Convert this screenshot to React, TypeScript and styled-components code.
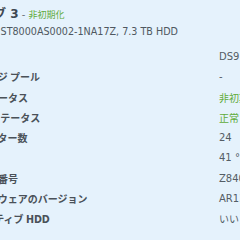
import React from "react";
import styled, { createGlobalStyle } from "styled-components";

const Global = createGlobalStyle`
  html, body {
    margin: 0;
    padding: 0;
    background: #e5f2fc;
    overflow: hidden;
  }
  body {
    width: 240px;
    height: 240px;
  }
`;

const Panel = styled.div`
  width: 420px;
  margin-left: -42px;
  padding-top: 6px;
  font-family: "DejaVu Sans", "Noto Sans CJK JP", sans-serif;
  color: #4a525a;
`;

const Header = styled.div`
  display: flex;
  flex-direction: column;
  gap: 2px;
`;

const Title = styled.div`
  display: flex;
  align-items: baseline;
  height: 16px;
  line-height: 16px;
  white-space: nowrap;
  font-size: 12px;
  font-weight: bold;
  color: #3e4852;
`;

const Sep = styled.span`
  font-weight: normal;
  font-size: 10px;
  color: #6a747c;
  white-space: pre;
`;

const State = styled.span`
  font-weight: normal;
  font-size: 9px;
  color: #5fab3a;
  font-family: "Noto Sans CJK JP", sans-serif;
`;

const Model = styled.div`
  height: 16px;
  line-height: 16px;
  font-size: 9.6px;
  color: #4f5860;
  white-space: nowrap;
`;

const Details = styled.div`
  margin-top: 7px;
  display: grid;
  grid-template-columns: 261px 1fr;
  grid-auto-rows: 20.25px;
  align-items: center;
`;

const Label = styled.div`
  font-family: "Noto Sans CJK JP", "DejaVu Sans", sans-serif;
  font-weight: bold;
  font-size: 10px;
  color: #4a5158;
  white-space: nowrap;
  line-height: 14px;
`;

const LatinBold = styled.span`
  font-family: "DejaVu Sans", sans-serif;
  font-size: 9.6px;
`;

const Value = styled.div<{ $green?: boolean; $cjk?: boolean }>`
  font-size: 10px;
  font-family: ${(p) =>
    p.$cjk ? `"Noto Sans CJK JP", sans-serif` : `"DejaVu Sans", "Noto Sans CJK JP", sans-serif`};
  color: ${(p) => (p.$green ? "#5fab3a" : "#545d65")};
  white-space: nowrap;
  line-height: 14px;
`;

type Row = { label: React.ReactNode; value: string; green?: boolean; cjk?: boolean };

const rows: Row[] = [
  { label: "場所", value: "DS918+" },
  { label: "ストレージ プール", value: "-" },
  { label: "割当ステータス", value: "非初期化", green: true, cjk: true },
  { label: "ヘルス ステータス", value: "正常", green: true, cjk: true },
  { label: "不良セクター数", value: "24" },
  { label: "温度", value: "41 °C" },
  { label: "シリアル番号", value: "Z840A1B2" },
  { label: "ファームウェアのバージョン", value: "AR13" },
  {
    label: (
      <>
        <LatinBold>4K</LatinBold>&nbsp;ネイティブ <LatinBold>HDD</LatinBold>
      </>
    ),
    value: "いいえ",
    cjk: true,
  },
];

export default function App() {
  return (
    <>
      <Global />
      <Panel>
        <Header>
          <Title>
            <span>ドライブ 3</span>
            <Sep> - </Sep>
            <State>非初期化</State>
          </Title>
          <Model>Seagate ST8000AS0002-1NA17Z, 7.3 TB HDD</Model>
        </Header>
        <Details>
          {rows.map((r, i) => (
            <React.Fragment key={i}>
              <Label>{r.label}</Label>
              <Value $green={r.green} $cjk={r.cjk}>
                {r.value}
              </Value>
            </React.Fragment>
          ))}
        </Details>
      </Panel>
    </>
  );
}
